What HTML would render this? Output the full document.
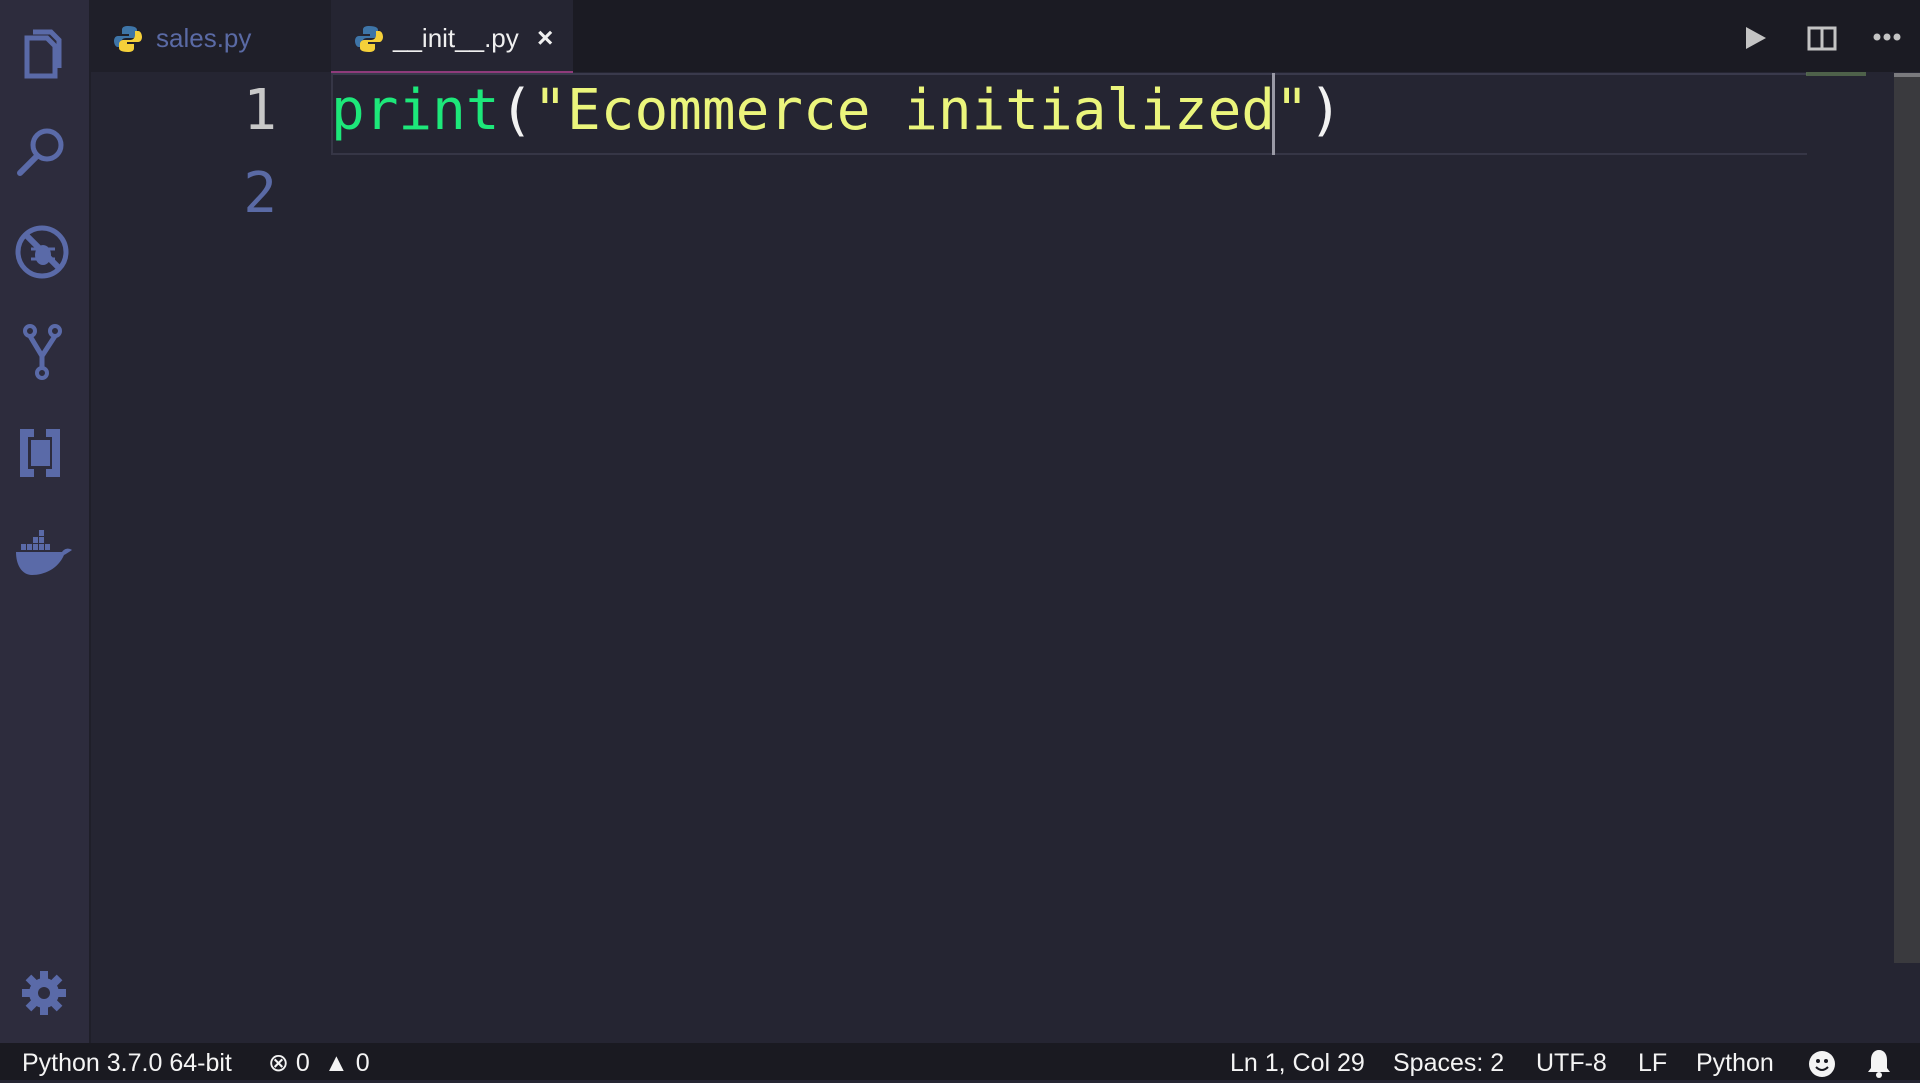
<!DOCTYPE html>
<html><head><meta charset="utf-8"><style>
body{margin:0;width:1920px;height:1080px;overflow:hidden;background:#252532;font-family:"Liberation Sans",sans-serif;position:relative}
.act{position:absolute;left:0;top:0;width:89px;height:1043px;background:#2d2c3d;border-right:2px solid #1f1f29}
.act svg{position:absolute;left:15px}
.tabs{position:absolute;left:91px;top:0;right:0;height:72px;background:#1b1b23}
.tab{position:absolute;top:0;height:72px;line-height:76px;font-size:26px}
.t1{left:0;width:240px;background:#1f1f29;color:#5a6aa5}
.t2{left:240px;width:242px;background:#252532;color:#f0f0f0;border-bottom:3px solid #8f3b7b;box-sizing:border-box;height:74px}
.py{position:absolute;top:24px}
.code{position:absolute;font-family:"DejaVu Sans Mono","Liberation Mono",monospace;font-size:56px;white-space:pre}
.status{position:absolute;left:0;top:1043px;width:1920px;height:37px;background:#1a1a21;color:#f4f4f4;font-size:25px;line-height:40px}
.status span{position:absolute;top:0}
</style></head><body>
<div class="act">
<svg style="top:28px" width="58" height="52" viewBox="0 0 58 52"><path d="M12 10 h20 l8 8 v30 h-28z" fill="none" stroke="#5a6aa8" stroke-width="5"/><path d="M18 4 h18 l8 8 v28" fill="none" stroke="#5a6aa8" stroke-width="5"/></svg>
<svg style="top:125px" width="58" height="52" viewBox="0 0 58 52"><circle cx="32" cy="20" r="14" fill="none" stroke="#5a6aa8" stroke-width="5"/><path d="M22 31 L5 48" stroke="#5a6aa8" stroke-width="6" stroke-linecap="round"/></svg>
<svg style="top:223px" width="58" height="58" viewBox="0 0 58 58"><circle cx="27" cy="29" r="24" fill="none" stroke="#5a6aa8" stroke-width="5"/><ellipse cx="28" cy="32" rx="8" ry="10" fill="#5a6aa8"/><path d="M12 13 L44 45" stroke="#5a6aa8" stroke-width="6"/><path d="M16 26h8M16 36h8M32 26h8M32 36h8" stroke="#5a6aa8" stroke-width="3"/></svg>
<svg style="top:323px" width="58" height="58" viewBox="0 0 58 58"><circle cx="15" cy="8" r="5" fill="none" stroke="#5a6aa8" stroke-width="4"/><circle cx="40" cy="8" r="5" fill="none" stroke="#5a6aa8" stroke-width="4"/><circle cx="27" cy="50" r="5" fill="none" stroke="#5a6aa8" stroke-width="4"/><path d="M15 13 L27 33 L40 13 M27 33 V45" fill="none" stroke="#5a6aa8" stroke-width="5"/></svg>
<svg style="top:429px" width="58" height="48" viewBox="0 0 58 48"><path d="M5 0h14v8h-6v32h6v8h-14z M31 0h14v48h-14v-8h6v-32h-6z" fill="#5a6aa8"/><rect x="16" y="11" width="19" height="26" fill="#5a6aa8"/></svg>
<svg style="top:530px" width="58" height="46" viewBox="0 0 58 46"><path d="M1 22 h46 c3-4 7-4 10-2 c-3 2-6 4-8 5 c-6 14-20 20-32 20 c-10 0-16-10-16-23z" fill="#5a6aa8"/><g fill="#5a6aa8"><rect x="6" y="14" width="5" height="6"/><rect x="12" y="14" width="5" height="6"/><rect x="18" y="14" width="5" height="6"/><rect x="24" y="14" width="5" height="6"/><rect x="30" y="14" width="5" height="6"/><rect x="18" y="7" width="5" height="6"/><rect x="24" y="7" width="5" height="6"/><rect x="24" y="0" width="5" height="6"/></g></svg>
<svg style="top:968px" width="58" height="50" viewBox="0 0 50 50"><g transform="translate(25 25)" fill="#5a6aa8"><circle r="15"/><g id="t"><rect x="-4" y="-22" width="8" height="10"/></g><use href="#t" transform="rotate(45)"/><use href="#t" transform="rotate(90)"/><use href="#t" transform="rotate(135)"/><use href="#t" transform="rotate(180)"/><use href="#t" transform="rotate(225)"/><use href="#t" transform="rotate(270)"/><use href="#t" transform="rotate(315)"/><circle r="6" fill="#2d2c3d"/></g></svg>
</div>
<div class="tabs">
<div class="tab t1"><svg class="py" style="left:22px" width="30" height="30" viewBox="0 0 30 30"><path d="M15 2c-6 0-6 3-6 4v4h7v2H5c-3 0-4 3-4 5s1 6 4 6h3v-4c0-3 2-5 5-5h7c2 0 4-2 4-4V6c0-2-2-4-9-4z" fill="#3e75a8"/><path d="M15 28c6 0 6-3 6-4v-4h-7v-2h11c3 0 4-3 4-5s-1-6-4-6h-3v4c0 3-2 5-5 5h-7c-2 0-4 2-4 4v4c0 2 2 4 9 4z" fill="#f5d03a"/></svg><span style="position:absolute;left:65px">sales.py</span></div>
<div class="tab t2"><svg class="py" style="left:23px" width="30" height="30" viewBox="0 0 30 30"><path d="M15 2c-6 0-6 3-6 4v4h7v2H5c-3 0-4 3-4 5s1 6 4 6h3v-4c0-3 2-5 5-5h7c2 0 4-2 4-4V6c0-2-2-4-9-4z" fill="#3e75a8"/><path d="M15 28c6 0 6-3 6-4v-4h-7v-2h11c3 0 4-3 4-5s-1-6-4-6h-3v4c0 3-2 5-5 5h-7c-2 0-4 2-4 4v4c0 2 2 4 9 4z" fill="#f5d03a"/></svg><span style="position:absolute;left:62px">__init__.py</span><span style="position:absolute;left:206px;font-size:28px;font-weight:bold">×</span></div>
<svg style="position:absolute;left:1653px;top:26px" width="24" height="24"><path d="M2 1 L22 12 L2 23z" fill="#c4c4c4"/></svg>
<svg style="position:absolute;left:1716px;top:26px" width="30" height="25"><rect x="2" y="2" width="26" height="21" fill="none" stroke="#c4c4c4" stroke-width="3"/><path d="M15 2v21" stroke="#c4c4c4" stroke-width="3"/></svg>
<svg style="position:absolute;left:1782px;top:32px" width="30" height="10"><circle cx="4" cy="5" r="3.5" fill="#c4c4c4"/><circle cx="14" cy="5" r="3.5" fill="#c4c4c4"/><circle cx="24" cy="5" r="3.5" fill="#c4c4c4"/></svg>
</div>
<div style="position:absolute;left:331px;top:73px;width:1476px;height:82px;border:2px solid #363646;border-right:none;box-sizing:border-box;border-top-color:#3a3a4c"></div>
<div class="code" style="left:200px;top:78px;width:77px;text-align:right;color:#c8c8c8">1</div>
<div class="code" style="left:200px;top:161px;width:77px;text-align:right;color:#5a6aa5">2</div>
<div class="code" style="left:331px;top:78px"><span style="color:#1de87a">print</span><span style="color:#f2f2f2">(</span><span style="color:#ebf57c">"Ecommerce initialized"</span><span style="color:#f2f2f2">)</span></div>
<div style="position:absolute;left:1272px;top:73px;width:3px;height:82px;background:#9a9aa6"></div>
<div style="position:absolute;left:1806px;top:72px;width:60px;height:4px;background:#6a8a5a;opacity:.6"></div>
<div style="position:absolute;left:1894px;top:73px;width:26px;height:890px;background:#3a3a3e"></div>
<div style="position:absolute;left:1894px;top:73px;width:26px;height:4px;background:#7a7a7e"></div>
<div class="status">
<span style="left:22px">Python 3.7.0 64-bit</span>
<span style="left:268px">⊗ 0</span><span style="left:324px">▲ 0</span>
<span style="left:1230px">Ln 1, Col 29</span>
<span style="left:1393px">Spaces: 2</span>
<span style="left:1536px">UTF-8</span>
<span style="left:1638px">LF</span>
<span style="left:1696px">Python</span>
<svg style="position:absolute;left:1808px;top:7px" width="28" height="28"><circle cx="14" cy="14" r="13" fill="#f4f4f4"/><circle cx="10" cy="11" r="2" fill="#1a1a21"/><circle cx="18" cy="11" r="2" fill="#1a1a21"/><path d="M8 17 q6 6 12 0" stroke="#1a1a21" stroke-width="2" fill="none"/></svg>
<svg style="position:absolute;left:1866px;top:5px" width="26" height="30"><path d="M13 2 c-5 0-8 4-8 10 v8 l-3 4 h22 l-3-4 v-8 c0-6-3-10-8-10z" fill="#f4f4f4"/><circle cx="13" cy="27" r="3" fill="#f4f4f4"/></svg>
</div>
</body></html>
